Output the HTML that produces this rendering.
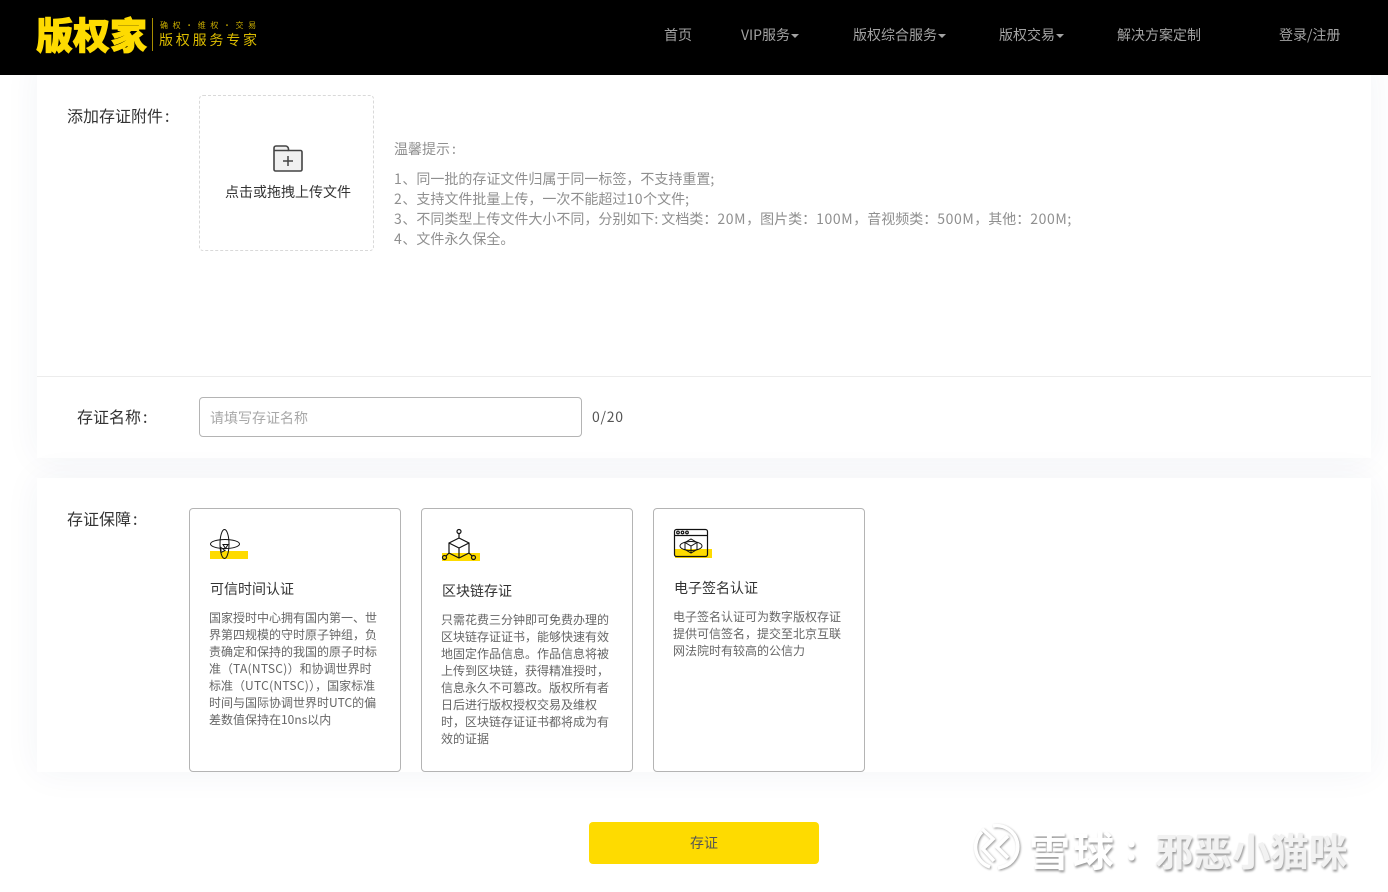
<!DOCTYPE html>
<html lang="zh"><head><meta charset="utf-8"><title>版权家</title>
<style>
*{box-sizing:border-box;margin:0;padding:0}
html,body{width:1388px;height:892px;overflow:hidden;background:#fff}
body{position:relative;font-family:"Noto Sans CJK SC","Liberation Sans",sans-serif;color:#333}
.a{position:absolute;white-space:nowrap}
.card{position:absolute;left:37px;width:1334px;background:#fff;box-shadow:0 0 34px rgba(40,50,110,.055)}
.nav{color:#a3a3a3;font-size:14px;line-height:20px;top:25px}
.nav i{display:inline-block;width:0;height:0;border:4px solid transparent;border-top:4px solid #a3a3a3;border-bottom:0;margin-left:1px;vertical-align:2px}
.tip{left:394px;font-size:14px;line-height:20px;color:#8f8f8f}
.tip b{font-weight:400;letter-spacing:.6px}
.n{letter-spacing:.75px}
.c{display:inline-block;padding-left:2px;padding-right:1px}
.box{position:absolute;width:212px;height:264px;top:508px;background:#fff;border:1px solid #b4b4b4;border-radius:4px}
.h{font-size:14px;line-height:20px;color:#333}
.p{font-size:12px;line-height:17px;color:#666;white-space:nowrap}
.p b{font-weight:400;letter-spacing:.3px}
.wm{font-weight:700;text-shadow:1px 2px 2px rgba(0,0,0,.4)}
</style></head><body>
<div class="card" style="top:60px;height:398px"></div>
<div class="card" style="top:478px;height:294px"></div>
<div class="a" style="left:0;top:0;width:1388px;height:75px;background:#000"></div>

<div class="a" style="left:36px;top:8px;font-size:37px;line-height:50px;font-weight:900;color:#fedb00;-webkit-text-stroke:.9px #fedb00">版权家</div>
<div class="a" style="left:152px;top:18px;width:1px;height:33px;background:#a88f00"></div>
<div class="a" style="left:160px;top:20px;font-size:8px;line-height:11px;color:#c8ac00;letter-spacing:1.4px">确 权 · 维 权 · 交 易</div>
<div class="a" style="left:159px;top:30px;font-size:14px;line-height:20px;color:#dcbc00;letter-spacing:2.8px">版权服务专家</div>

<div class="a nav" style="left:664px">首页</div>
<div class="a nav" style="left:741px">VIP服务<i></i></div>
<div class="a nav" style="left:853px">版权综合服务<i></i></div>
<div class="a nav" style="left:999px">版权交易<i></i></div>
<div class="a nav" style="left:1117px">解决方案定制</div>
<div class="a nav" style="left:1279px">登录/注册</div>

<div class="a" style="left:67px;top:104px;font-size:16px;line-height:22px;color:#333">添加存证附件<span class="c">:</span></div>
<div class="a" style="left:199px;top:95px;width:175px;height:156px;border:1px dashed #d9d9d9;border-radius:4px"></div>
<svg class="a" style="left:272px;top:144px" width="32" height="29" viewBox="0 0 32 29" fill="none">
<path d="M2 13V4a2 2 0 0 1 2-2h9.500a3 3 0 0 1 3 3v1.500H28.500a1.500 1.500 0 0 1 1.500 1.500V25.500a1.500 1.500 0 0 1-1.500 1.500H3.500A1.500 1.500 0 0 1 2 25.500Z" fill="#f0f0f0" stroke="#444" stroke-width="1.600"/>
<path d="M2 6.500H16.500M16 12V22M11 17H21" stroke="#444" stroke-width="1.500"/></svg>
<div class="a" style="left:225px;top:182px;font-size:14px;line-height:20px;color:#333">点击或拖拽上传文件</div>

<div class="a tip" style="top:139px">温馨提示<span class="c">:</span></div>
<div class="a tip" style="top:169px"><b>1</b>、同一批的存证文件归属于同一标签，不支持重置;</div>
<div class="a tip" style="top:189px"><b>2</b>、支持文件批量上传，一次不能超过<b>10</b>个文件;</div>
<div class="a tip" style="top:209px"><b>3</b>、不同类型上传文件大小不同，分别如下: 文档类：<b>20M</b>，图片类：<b>100M</b>，音视频类：<b>500M</b>，其他：<b>200M</b>;</div>
<div class="a tip" style="top:229px"><b>4</b>、文件永久保全。</div>

<div class="a" style="left:37px;top:376px;width:1334px;height:1px;background:#ececec"></div>
<div class="a" style="left:77px;top:405px;font-size:16px;line-height:22px;color:#333">存证名称<span class="c">:</span></div>
<div class="a" style="left:199px;top:397px;width:383px;height:40px;border:1px solid #b4b4b4;border-radius:4px"></div>
<div class="a" style="left:210px;top:408px;font-size:14px;line-height:20px;color:#a8a8a8">请填写存证名称</div>
<div class="a n" style="left:592px;top:407px;font-size:14px;line-height:20px;color:#555">0/20</div>

<div class="a" style="left:67px;top:507px;font-size:16px;line-height:22px;color:#333">存证保障<span class="c">:</span></div>

<div class="box" style="left:189px"></div>
<div class="a" style="left:210px;top:551px;width:38px;height:8px;background:#fedb00"></div>
<svg class="a" style="left:208px;top:527px" width="34" height="34" viewBox="0 0 34 34" fill="none" stroke="#111" stroke-width="1">
<ellipse cx="17" cy="17" rx="14.500" ry="4.500"/><ellipse cx="16.500" cy="17" rx="4.500" ry="14.500"/>
<path d="M15 17.500h5l-2.500 4zM13 20.500l4 3-4 2z" fill="#fff"/></svg>
<div class="a h" style="left:210px;top:579px">可信时间认证</div>
<div class="a p" style="left:209px;top:609px">国家授时中心拥有国内第一、世<br>界第四规模的守时原子钟组，负<br>责确定和保持的我国的原子时标<br>准（<b>TA(NTSC)</b>）和协调世界时<br>标准（<b>UTC(NTSC)</b>），国家标准<br>时间与国际协调世界时UTC的偏<br>差数值保持在10ns以内</div>

<div class="box" style="left:421px"></div>
<div class="a" style="left:442px;top:553px;width:38px;height:8px;background:#fedb00"></div>
<svg class="a" style="left:440px;top:527px" width="38" height="36" viewBox="0 0 38 36" fill="none" stroke="#111" stroke-width="1.200">
<circle cx="19" cy="4.500" r="2"/><path d="M19 6.500V11M9 16l10-5 10 5v10l-10 5-10-5zM9 16l10 5 10-5M19 21v10M9 26l-3 3M29 26l3 3"/>
<circle cx="4.500" cy="30.500" r="2"/><circle cx="33.500" cy="30.500" r="2"/></svg>
<div class="a h" style="left:442px;top:581px">区块链存证</div>
<div class="a p" style="left:441px;top:611px">只需花费三分钟即可免费办理的<br>区块链存证证书，能够快速有效<br>地固定作品信息。作品信息将被<br>上传到区块链，获得精准授时，<br>信息永久不可篡改。版权所有者<br>日后进行版权授权交易及维权<br>时，区块链存证证书都将成为有<br>效的证据</div>

<div class="box" style="left:653px"></div>
<div class="a" style="left:675px;top:549px;width:37px;height:9px;background:#fedb00"></div>
<svg class="a" style="left:673px;top:528px" width="38" height="30" viewBox="0 0 38 30" fill="none" stroke="#111" stroke-width="1.200">
<rect x="1.500" y="1.500" width="33" height="27" rx="2"/><path d="M1.500 7.500H34.500"/>
<circle cx="5" cy="4.500" r="1.300"/><circle cx="9.500" cy="4.500" r="1.300"/><circle cx="14" cy="4.500" r="1.300"/>
<path d="M12 14.500l6-3.500 6 3.500v7l-6 3.500-6-3.500zM12 14.500l6 3.500 6-3.500M18 18v7" stroke-width="1"/>
<ellipse cx="18" cy="18" rx="11" ry="4.500" stroke-width="1"/></svg>
<div class="a h" style="left:674px;top:578px">电子签名认证</div>
<div class="a p" style="left:673px;top:608px">电子签名认证可为数字版权存证<br>提供可信签名，提交至北京互联<br>网法院时有较高的公信力</div>

<div class="a" style="left:589px;top:822px;width:230px;height:42px;background:#fedb00;border-radius:4px;text-align:center;font-size:14px;line-height:42px;color:#555">存证</div>

<svg class="a" style="left:966px;top:817px" width="60" height="60" viewBox="0 0 60 60" fill="none">
<g style="filter:drop-shadow(1px 1.500px 1px rgba(0,0,0,.4))" stroke="#fff" stroke-width="3.500">
<path d="M16 15A21 21 0 0 0 24 50M27 9A21 21 0 0 1 36 50 21 21 0 0 1 32 51"/>
<path d="M16 12L27 22 17 32 28 44M42 19L31 30 42 41"/></g></svg>
<div class="a wm" style="left:1029px;top:821px;font-size:41px;line-height:54px;letter-spacing:3px;color:#fff">雪球</div>
<div class="a wm" style="left:1126px;top:819px;font-size:34px;line-height:54px;color:#fff">:</div>
<div class="a wm" style="left:1155px;top:823px;font-size:38.500px;line-height:54px;color:#f2f2f2">邪恶小猫咪</div>
</body></html>
